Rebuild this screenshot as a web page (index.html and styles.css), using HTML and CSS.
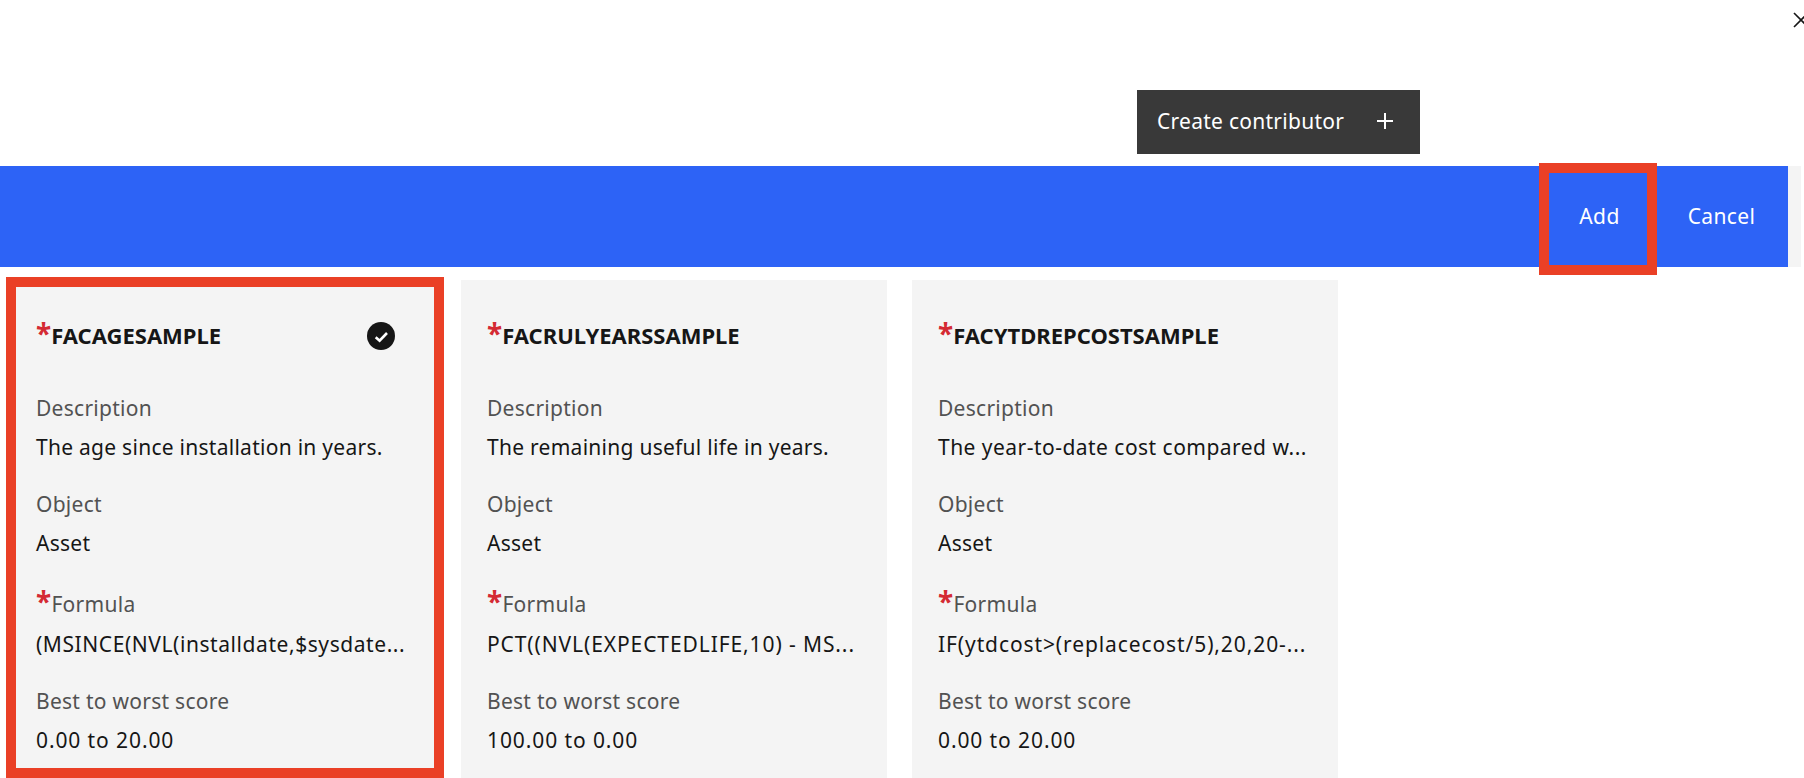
FILE: index.html
```html
<!DOCTYPE html>
<html lang="en">
<head>
<meta charset="utf-8">
<title>Contributors</title>
<link rel="stylesheet" href="styles.css">
</head>
<body>
<div class="page">
  <div class="close-row">
    <svg class="close" viewBox="0 0 16 16" width="16" height="16"><path d="M1 1 L15 15 M15 1 L1 15" fill="none" stroke="#161616" stroke-width="1.6"/></svg>
  </div>
  <div class="create-row">
    <button class="create"><span class="create-label">Create contributor</span>
      <svg class="plus" viewBox="0 0 18 18" width="18" height="18"><path d="M9 1 V17 M1 9 H17" fill="none" stroke="#fff" stroke-width="2"/></svg>
    </button>
  </div>
  <div class="action-wrap">
    <div class="action-bar">
      <button class="action add">Add<span class="mark mark-add"></span></button>
      <button class="action cancel">Cancel</button>
    </div>
  </div>
  <div class="cards">
    <section class="card">
      <span class="mark mark-card"></span>
      <div class="card-head">
        <h3 class="title"><span class="req">*</span>FACAGESAMPLE</h3>
        <svg class="check" viewBox="0 0 28 28" width="28" height="28"><circle cx="14" cy="14" r="14" fill="#161616"/><path d="M8.7 15.2 L12.6 18.7 L20 11" fill="none" stroke="#fff" stroke-width="2.6"/></svg>
      </div>
      <div class="label l-desc">Description</div>
      <div class="value">The age since installation in years.</div>
      <div class="label l-obj">Object</div>
      <div class="value">Asset</div>
      <div class="label l-form"><span class="req">*</span>Formula</div>
      <div class="value formula-tight">(MSINCE(NVL(installdate,$sysdate...</div>
      <div class="label l-best">Best to worst score</div>
      <div class="value numeric">0.00 to 20.00</div>
    </section>
    <section class="card">
      <div class="card-head">
        <h3 class="title"><span class="req">*</span>FACRULYEARSSAMPLE</h3>
      </div>
      <div class="label l-desc">Description</div>
      <div class="value">The remaining useful life in years.</div>
      <div class="label l-obj">Object</div>
      <div class="value">Asset</div>
      <div class="label l-form"><span class="req">*</span>Formula</div>
      <div class="value numeric">PCT((NVL(EXPECTEDLIFE,10) - MS...</div>
      <div class="label l-best">Best to worst score</div>
      <div class="value numeric">100.00 to 0.00</div>
    </section>
    <section class="card">
      <div class="card-head">
        <h3 class="title"><span class="req">*</span>FACYTDREPCOSTSAMPLE</h3>
      </div>
      <div class="label l-desc">Description</div>
      <div class="value desc-wide">The year-to-date cost compared w...</div>
      <div class="label l-obj">Object</div>
      <div class="value">Asset</div>
      <div class="label l-form"><span class="req">*</span>Formula</div>
      <div class="value numeric">IF(ytdcost&gt;(replacecost/5),20,20-...</div>
      <div class="label l-best">Best to worst score</div>
      <div class="value numeric">0.00 to 20.00</div>
    </section>
  </div>
</div>
</body>
</html>
```
FILE: styles.css
```css
* { box-sizing: border-box; }
html, body { margin: 0; padding: 0; background: #fff; }
body { font-family: "Noto Sans", "Liberation Sans", sans-serif; color: #161616; }
.page { width: 1804px; height: 778px; overflow: hidden; }
button { font: inherit; border: 0; margin: 0; cursor: pointer; }

.close-row { height: 90px; display: flex; justify-content: flex-end; align-items: flex-start; padding-top: 12px; }
.close { flex: none; margin-right: -5px; }

.create-row { height: 64px; padding-left: 1137px; }
.create { width: 283px; height: 64px; background: #393939; color: #fff; font-size: 21px; letter-spacing: 0.27px; display: flex; align-items: center; padding: 0 26px 2px 20px; justify-content: space-between; }
.plus { flex: none; }

.action-wrap { margin-top: 12px; width: 1801px; height: 101px; background: #f4f4f4; padding-right: 13px; }
.action-bar { height: 101px; background: #2d63f6; display: flex; justify-content: flex-end; }
.action { background: transparent; color: #fff; font-size: 21px; letter-spacing: 0.35px; position: relative; }
.add { width: 98px; margin-right: 10px; padding: 0 0 2px 3px; }
.cancel { width: 131px; padding: 0 2px 2px 0; }

.mark { position: absolute; border: 10px solid #ea4026; pointer-events: none; }
.mark-add { left: -10px; right: -10px; top: -3px; bottom: -8px; }
.mark-card { left: -4px; right: -8px; top: -3px; height: 501px; }

.cards { display: flex; gap: 25.5px; margin-top: 13px; padding-left: 10px; }
.card { position: relative; flex: none; width: 425.5px; height: 560px; background: #f4f4f4; padding: 42px 41px 0 26px; }
.card-head { height: 28px; display: flex; justify-content: space-between; align-items: center; }
.title { margin: 0; padding-bottom: 2px; font-size: 22px; font-weight: 700; line-height: 28px; }
.check { flex: none; }
.req { color: #d42a33; font-size: 28px; line-height: 20px; font-weight: 700; }
.label { color: #525252; font-size: 21px; letter-spacing: 0.27px; line-height: 28px; }
.value { font-size: 21px; letter-spacing: 0.27px; line-height: 28px; margin-top: 11px; white-space: nowrap; }
.numeric { letter-spacing: 0.9px; }
.formula-tight { letter-spacing: 0.57px; }
.desc-wide { letter-spacing: 0.47px; }
.l-desc { margin-top: 44px; }
.l-obj { margin-top: 29px; }
.l-form { margin-top: 33px; }
.l-form + .value { margin-top: 12px; }
.l-best { margin-top: 29px; }
```
